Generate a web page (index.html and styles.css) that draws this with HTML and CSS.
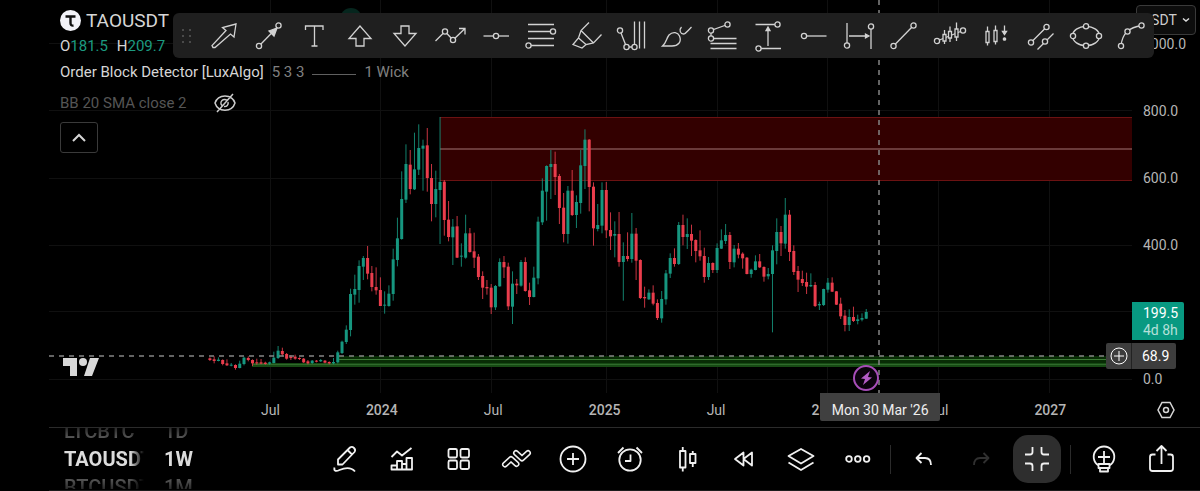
FILE: index.html
```html
<!DOCTYPE html>
<html lang="en">
<head>
    <meta charset="UTF-8">
    <meta name="viewport" content="width=device-width, initial-scale=1.0">
    <title>TAOUSDT 1W</title>
    <link rel="stylesheet" href="styles.css">
</head>
<body>
    <!-- Chart -->
    <main class="chart">
        <section class="plot">
            <svg class="plot-canvas" viewBox="49 0 1083 393" preserveAspectRatio="none" aria-label="TAOUSDT weekly candles">
                <path class="grid-lines" d="M270.5 0V393M380.5 0V393M491.5 0V393M606.5 0V393M717.5 0V393M827.5 0V393M938.5 0V393M1049.5 0V393M49 43.5H1132M49 110.5H1132M49 178.5H1132M49 245.5H1132M49 311.5H1132M49 379.5H1132"/>
                <circle cx="351" cy="19" r="11" fill="#06261e"/>
                <!-- Order blocks -->
                <rect x="440" y="117" width="692" height="64" fill="#330000"/>
                <path d="M440 117.5H1132M440 180.5H1132" stroke="#6b1212"/>
                <path d="M440 149H1132" stroke="#6b3a3a" stroke-width="2"/>
                <rect x="338" y="356" width="794" height="11" fill="#082c05"/>
                <rect x="252" y="363" width="880" height="4" fill="#174a14"/>
                <path d="M338 359.5H1132" stroke="#3c7a36"/>
                <path d="M252 364.5H1132" stroke="#2f6a2b"/>
                <g id="candles"></g>
                <!-- Crosshair -->
                <path class="crosshair" d="M49 356H1106M879 0V393"/>
                <circle cx="866" cy="378" r="12" fill="#0b020d" stroke="#a74db8" stroke-width="2"/>
                <path d="M870 371l-9 7.500 4 .5-2 6 9-7.500-4-.5z" fill="#b45bc6"/>
            </svg>

            <div class="legend">
                <h1 class="symbol">
                    <svg width="21" height="21" viewBox="0 0 21 21" aria-hidden="true">
                        <circle cx="10.5" cy="10.5" r="10.5" fill="#f2f2f8"/>
                        <path d="M5.5 6.5h10M10.5 7v6q0 3 3 2.5" fill="none" stroke="#111" stroke-width="2.4"/>
                    </svg>
                    TAOUSDT
                </h1>
                <p class="ohlc">O<span>181.5</span> <b>H</b><span>209.7</span></p>
                <p class="indicator">Order Block Detector [LuxAlgo] <span>5 3 3</span><i></i><span>1 Wick</span></p>
                <p class="indicator hidden">BB 20 SMA close 2
                    <button class="eye" aria-label="Show indicator">
                        <svg width="24" height="20" viewBox="0 0 24 20"><path d="M2 10C5 .5 19 .5 22 10 19 19.5 5 19.5 2 10zM4 19 20 1M9 12.5a3.500 3.500 0 0 1 5-5M15 9a3.500 3.500 0 0 1-4 4.500"/></svg>
                    </button>
                </p>
                <button class="collapse-legend" aria-label="Collapse legend">
                    <svg width="16" height="10" viewBox="0 0 16 10"><path d="M2 8l6-6 6 6"/></svg>
                </button>
            </div>

            <svg class="brand" width="37" height="19" viewBox="0 0 37 19" aria-label="TradingView">
                <path d="M0 0h14v18H7V8H0zM27 0h9l-7 18h-8z"/><circle cx="20" cy="4" r="4"/>
            </svg>
        </section>

        <aside class="price-axis">
            <span>1000.0</span>
            <span>800.0</span>
            <span>600.0</span>
            <span>400.0</span>
            <span></span>
            <span>0.0</span>
            <div class="last-price">199.5<br><small>4d 8h</small></div>
            <div class="cross-price">
                <button aria-label="Add alert"><svg width="18" height="18" viewBox="0 0 18 18"><circle cx="9" cy="9" r="8"/><path d="M9 4v10M4 9h10"/></svg></button>
                <span>68.9</span>
            </div>
            <label class="currency">
                <select aria-label="Currency"><option>USDT</option></select>
                <svg width="8" height="6" viewBox="0 0 8 6"><path d="M1 1.5l3 2.5 3-2.5"/></svg>
            </label>
        </aside>

        <div class="time-axis">
            <span>Jul</span>
            <strong>2024</strong>
            <span>Jul</span>
            <strong>2025</strong>
            <span>Jul</span>
            <strong>2026</strong>
            <span>Jul</span>
            <strong>2027</strong>
            <div class="cross-date">Mon 30 Mar '26</div>
        </div>
        <button class="axis-settings" aria-label="Axis settings">
            <svg width="18" height="18" viewBox="0 0 18 18"><path d="M5 1.5h8l4 7.5-4 7.5H5L1 9z"/><circle cx="9" cy="9" r="2.5"/></svg>
        </button>

        <!-- Favourite drawing tools -->
        <div class="drawing-tools" role="toolbar" aria-label="Drawing tools">
            <svg class="grip" width="12" height="16" viewBox="0 0 12 16" aria-hidden="true">
                <circle cx="2" cy="2" r="1"/><circle cx="9" cy="2" r="1"/><circle cx="2" cy="8" r="1"/><circle cx="9" cy="8" r="1"/><circle cx="2" cy="14" r="1"/><circle cx="9" cy="14" r="1"/>
            </svg>
            <button aria-label="Arrow marker"><svg viewBox="0 0 28 28"><path d="M26 2 12.5 5.5 16 8.5 2 23.5l1 2h2L20.5 12l3.5 3z"/></svg></button>
            <button aria-label="Arrow"><svg viewBox="0 0 28 28"><path d="M4 24 23.5 4"/><path class="solid" d="M22 6l-3 8-5-5z"/><circle cx="4" cy="24" r="2.6"/><circle cx="23.5" cy="3.5" r="2.6"/></svg></button>
            <button aria-label="Text"><svg viewBox="0 0 28 28"><path d="M5.5 8V4h17.5v4M14.5 4v20M11.5 24h6"/></svg></button>
            <button aria-label="Arrow mark up"><svg viewBox="0 0 28 28"><path d="M14 4 3 16.5H10V24H18V16.5H25z"/></svg></button>
            <button aria-label="Arrow mark down"><svg viewBox="0 0 28 28"><path d="M14 24 3 11.5H10V4H18V11.5H25z"/></svg></button>
            <button aria-label="Path"><svg viewBox="0 0 28 28"><path d="M-1.5 19 8 9.5l8 8.5L28 6.5M22 6.5h6v6"/><circle cx="8" cy="9.5" r="2.6"/><circle cx="16" cy="18" r="2.6"/></svg></button>
            <button aria-label="Horizontal line"><svg viewBox="0 0 28 28"><path d="M1.5 14H27"/><circle cx="14" cy="14" r="2.6"/></svg></button>
            <button aria-label="Fib retracement"><svg viewBox="0 0 28 28"><path d="M1 2.5H27M1 9.5H27M1 16.5H27M1 23.5H27"/><circle cx="26" cy="9.5" r="2.6"/><circle cx="1.5" cy="23.5" r="2.6"/></svg></button>
            <button aria-label="Highlighter"><svg viewBox="0 0 28 28"><path d="M16 .5 8 8.5 5.5 16 0 22.5l9 3.5 4-3.5 7.5-1.5 8-8.5M8 8.5 20.5 21M5.5 16 13 22.5"/></svg></button>
            <button aria-label="Pitchfan"><svg viewBox="0 0 28 28"><path d="M2 8.5l6.5 16.5h8V-.5M21.5-.5V26.5M26.5-.5V26.5"/><circle cx="2" cy="8.5" r="2.6"/><circle cx="8.5" cy="25" r="2.6"/><circle cx="16.5" cy="25" r="2.6"/></svg></button>
            <button aria-label="Brush"><svg viewBox="0 0 28 28"><path d="M-.5 24C4 20 3 17 6 13c4-4 9-2.5 10.5 1C19 20 15 24 9 24zM18.5 5c-3 3-1 7 2 7 2 0 3-2 8-7"/></svg></button>
            <button aria-label="Trend-based fib"><svg viewBox="0 0 28 28"><path d="M18.5 2.5 2 8.5v8H27.5M1.5 21.5h26M1.5 26.5h26"/><circle cx="18.5" cy="2.5" r="2.6"/><circle cx="2" cy="8.5" r="2.6"/><circle cx="2" cy="16.5" r="2.6"/></svg></button>
            <button aria-label="Price range"><svg viewBox="0 0 28 28"><path d="M1.5 2.5H24M4.5 26.5H27M14 24V6"/><path class="solid" d="M14 5l2 3.5h-4z"/><circle cx="23.5" cy="2.5" r="2.6"/><circle cx="4.5" cy="26.5" r="2.6"/></svg></button>
            <button aria-label="Horizontal ray"><svg viewBox="0 0 28 28"><path d="M4 14H26.5"/><circle cx="4" cy="14" r="2.6"/></svg></button>
            <button aria-label="Date range"><svg viewBox="0 0 28 28"><path d="M2 1V23M26 5V27M4 14H22"/><path class="solid" d="M24 14l-3.5 2v-4z"/><circle cx="2" cy="23.5" r="2.6"/><circle cx="26" cy="4.5" r="2.6"/></svg></button>
            <button aria-label="Trend line"><svg viewBox="0 0 28 28"><path d="M3.5 24 23.5 3.5"/><circle cx="3.5" cy="24" r="2.6"/><circle cx="23.5" cy="3.5" r="2.6"/></svg></button>
            <button aria-label="Bars pattern"><svg viewBox="0 0 28 28"><path d="M1 19l26-10.5M8.5 8v14M14 4.5V20M20.5.5V19"/><path class="body" d="M7 12.5h3v6.5H7zM12.5 9.5h3v6.5h-3zM19 7h3v8h-3z"/><circle cx="1" cy="19" r="2.6"/><circle cx="27" cy="8.5" r="2.6"/></svg></button>
            <button aria-label="Bars forecast"><svg viewBox="0 0 28 28"><path d="M6.5 4.5v19M14.5 3.5v19M23.5 3.5v6"/><path class="body" d="M5 9.5h3v11H5zM13 8.5h3v11h-3z"/><path class="solid" d="M21.5 9.5h4l-2 3z"/><circle class="solid" cx="23.5" cy="17" r="1.2"/></svg></button>
            <button aria-label="Parallel channel"><svg viewBox="0 0 28 28"><path d="M5 20.5 20.5 5M11.5 27.5l16-16"/><circle cx="5" cy="20.5" r="2.6"/><circle cx="20.5" cy="5" r="2.6"/><circle cx="19" cy="19.5" r="2.6"/></svg></button>
            <button aria-label="Ellipse"><svg viewBox="0 0 28 28"><ellipse cx="14" cy="14" rx="13.5" ry="9.7"/><circle cx="14" cy="4.3" r="2.6"/><circle cx="14" cy="23.7" r="2.6"/><circle cx="1" cy="14" r="2.6"/><circle cx="27" cy="14" r="2.6"/></svg></button>
            <button aria-label="Curve"><svg viewBox="0 0 28 28"><path d="M4 24Q5 14 10.5 9.5 15 5 24.5 3.5"/><circle cx="4" cy="24" r="2.6"/><circle cx="10.5" cy="9.5" r="2.6"/><circle cx="24.5" cy="3.5" r="2.6"/></svg></button>
        </div>
    </main>

    <!-- Bottom Bar -->
    <footer class="bottom-bar">
        <div class="wheel wheel-symbol">
            <span>LTCBTC</span>
            <strong>TAOUSDT</strong>
            <span>BTCUSDT</span>
        </div>
        <div class="wheel">
            <span>1D</span>
            <strong>1W</strong>
            <span>1M</span>
        </div>
        <nav class="actions">
            <button aria-label="Draw"><svg viewBox="0 0 28 28"><path d="M7 14.5 19 2.5q2-1.5 4 .5t.5 4L11.5 19.5H7zM16.5 5l4.5 4.5M3.5 22.5c-1 4 2 4 5 2.5 6-2.5 12-2.5 15.5 1.5"/></svg></button>
            <button aria-label="Indicators"><svg viewBox="0 0 28 28"><path d="M3.5 12 9 6.5l5 4L23.5 3M3.5 24.5v-4H9V16h5v3h4.5v-6H24V24.5zM9 20.5v4M14 19v5.5M18.5 19v5.5"/></svg></button>
            <button aria-label="Layouts"><svg viewBox="0 0 28 28"><rect x="3.5" y="4" width="8.5" height="8.5" rx="1.5"/><rect x="15.5" y="4" width="8.5" height="8.5" rx="1.5"/><rect x="3.5" y="15.5" width="8.5" height="8.5" rx="1.5"/><rect x="15.5" y="15.5" width="8.5" height="8.5" rx="1.5"/></svg></button>
            <button aria-label="Strategies"><svg viewBox="0 0 28 28"><g class="ribbon"><path d="M3 19.5 9 14l5.500 5"/><path class="inner" d="M3 19.5 9 14l5.500 5"/><path d="M14 8l6 5.500L26 8"/><path class="inner" d="M14 8l6 5.500L26 8"/></g></svg></button>
            <button aria-label="Add"><svg viewBox="0 0 28 28"><circle cx="14" cy="14" r="12.5"/><path d="M14 8v12M8 14h12"/></svg></button>
            <button aria-label="Alerts"><svg viewBox="0 0 28 28"><circle cx="14" cy="15" r="10.7"/><path d="M14.5 9.5V16H9M2 8l5.5-5.5M26 8l-5.5-5.5"/></svg></button>
            <button aria-label="Chart type"><svg viewBox="0 0 28 28"><path d="M7 6h5.5v16.5H7zM9.750 2v4M9.750 22.5v4M17 9h5.5v9H17zM19.750 6v3M19.750 18v4"/></svg></button>
            <button aria-label="Replay"><svg viewBox="0 0 28 28"><path d="M5 14l8.5-6.5v13zM13.5 14 22 7.5v13z"/></svg></button>
            <button aria-label="Object tree"><svg viewBox="0 0 28 28"><path d="M14 4 26.5 11 14 18.5 1.5 11zM1.5 17.5 14 25l12.5-7.5"/></svg></button>
            <button aria-label="More"><svg viewBox="0 0 28 28"><circle cx="5" cy="14" r="2.8"/><circle cx="13.8" cy="14" r="2.8"/><circle cx="22.6" cy="14" r="2.8"/></svg></button>
            <hr>
            <button aria-label="Undo"><svg viewBox="0 0 28 28"><path d="M11.5 8 6.5 13l5 5M6.5 13H15q6 0 6 7"/></svg></button>
            <button aria-label="Redo" disabled><svg viewBox="0 0 28 28"><path d="M16.5 8l5 5-5 5M21.5 13H13q-6 0-6 7"/></svg></button>
            <button class="active" aria-label="Exit fullscreen"><svg viewBox="0 0 28 28"><path d="M2 9.5h5q2.5 0 2.5-2.5V2M26 9.5h-5q-2.5 0-2.5-2.5V2M2 18.5h5q2.5 0 2.5 2.5v5M26 18.5h-5q-2.5 0-2.5 2.5v5"/></svg></button>
            <hr>
            <button aria-label="Publish idea"><svg viewBox="0 0 28 28"><path d="M8.5 20.5a10.3 10.3 0 1 1 11 0M8.5 19h11v4h-11zM10 23h8v3.5h-8zM14 6v12M8 12h12"/></svg></button>
            <button aria-label="Share"><svg viewBox="0 0 28 28"><path d="M8.5 9.5H5.5q-2.5 0-2.5 2.5v11.5q0 2.5 2.5 2.5h18q2.5 0 2.5-2.5V12q0-2.5-2.5-2.5h-3M14.5 19V1.5M9.5 6l5-5 5 5"/></svg></button>
        </nav>
    </footer>

    <script>
        // Each row: direction, body top, body bottom, wick top, wick bottom (3 units per chart unit)
        const history = `
            d 775 780 772 783|d 778 783 769 790|u 779 783 772 784|d 780 792 778 796|d 790 796 778 798
            u 794 797 789 799|d 795 804 793 809|u 791 804 782 805|u 773 792 770 796|d 774 780 769 784
            d 780 790 778 798|d 787 790 776 794|d 787 791 777 793|d 788 792 785 794|u 787 791 785 794
            u 773 789 755 790|u 752 774 738 777|d 753 763 743 769|d 762 776 759 779|d 770 774 765 780
            d 770 776 764 779|d 774 777 772 780|d 776 787 774 789|d 784 790 780 793|u 782 789 780 792
            d 782 785 780 787|u 780 784 777 786|d 782 788 780 790|d 786 790 784 793|u 786 790 774 793
            u 757 787 752 790|u 725 759 722 762|u 689 726 676 732|u 582 690 566 709|u 567 584 524 614
            u 498 570 481 608|u 474 500 468 540|d 474 521 438 538|d 519 561 498 574|d 561 571 502 584
            d 570 618 532 618|u 614 617 574 641|u 581 618 556 620|u 478 582 446 602|u 415 480 353 499
            u 297 417 214 419|u 192 299 133 309|d 194 267 150 283|u 208 268 98 270|u 144 209 73 225
            u 137 146 119 272|d 136 234 84 275|d 234 312 192 364|u 267 312 212 352|u 246 270 51 432
            d 245 360 240 407|d 359 411 303 424|u 380 412 357 495|d 379 473 348 474|u 467 470 430 500
            u 400 473 344 476|d 400 456 384 458|d 454 473 398 504|d 470 531 462 540|d 528 563 514 597
            d 561 565 540 584|d 563 622 552 642|u 558 622 555 630|u 486 559 475 560|d 486 502 468 534
            d 500 619 488 630|u 551 620 514 672|d 551 556 537 582|u 486 557 480 560|d 486 573 472 575
            d 571 591 548 615|u 533 591 500 592|u 365 535 350 553|u 272 367 235 375|u 198 275 196 362
            u 192 201 150 297|d 192 231 155 285|d 228 324 222 372|d 323 402 279 427|u 272 402 258 431
            d 272 345 210 348|u 306 345 286 384|u 196 309 150 341|u 119 198 88 267|d 119 261 117 334
            d 260 385 247 437|u 375 387 312 394|u 270 377 247 400|d 270 391 246 414|d 390 409 337 450
            u 402 407 364 472|d 402 486 336 500|u 468 486 427 602|d 468 477 397 484|u 401 477 339 488
            d 401 482 384 540|d 480 594 478 597|d 591 595 560 623|u 578 598 568 600|d 578 611 556 616
            d 609 654 598 660|u 597 655 573 668|u 520 598 510 614|u 474 521 460 534|d 474 492 445 500
            u 375 492 366 495`;
        const recent = `
            d 135 171 104 196|u 162 171 115 207|d 162 182 134 228|d 180 213 178 247|d 211 229 151 242
            d 228 291 203 308|u 249 291 231 300|d 249 270 247 279|u 204 270 190 279|u 181 206 148 207
            u 165 183 132 192|d 165 246 156 267|u 206 247 195 262|d 206 224 189 235|d 221 235 217 266
            d 233 282 231 283|u 269 282 266 293|u 244 270 226 271|d 244 262 222 264|d 261 290 259 305
            u 282 289 264 298|u 211 282 196 457|u 156 213 115 253|d 156 190 138 228|u 104 191 54 206
            d 104 216 90 243|d 213 276 196 285|d 273 299 258 336|d 297 309 272 318|d 306 320 278 342
            u 315 319 280 321|d 315 378 306 381|u 372 376 365 390|u 327 375 326 378|u 308 329 294 338
            d 308 335 292 336|d 334 374 333 375|d 371 409 353 417|d 407 435 390 454|u 411 435 388 453
            d 411 423 380 426|u 418 423 404 433|u 414 419 400 424|u 396 416 387 417`;

        function parse(text, top) {
            return text.trim().split(/\n|\|/).map(row => {
                const [dir, ...values] = row.trim().split(' ');
                return [dir, ...values.map(v => top + v / 3)];
            });
        }

        const firstX = 209.9;
        const step = 4.262;
        const candles = [...parse(history, 100), ...parse(recent, 180)];

        document.getElementById('candles').innerHTML = candles.map(([dir, top, bottom, high, low], i) => {
            const x = firstX + i * step;
            return `<g class="${dir === 'u' ? 'up' : 'down'}">
                <rect class="wick" x="${x - 0.5}" y="${high}" width="1" height="${low - high}"/>
                <rect x="${x - 1.5}" y="${top}" width="3" height="${bottom - top}"/>
            </g>`;
        }).join('');
    </script>
</body>
</html>
```
FILE: styles.css
```css
/* Global Styles */
* {
    box-sizing: border-box;
}

body {
    margin: 0;
    min-height: 100vh;
    display: flex;
    flex-direction: column;
    background-color: #000;
    color: #d6d6d6;
    font-family: Roboto, Arial, sans-serif;
    font-size: 14px;
}

button {
    display: flex;
    align-items: center;
    justify-content: center;
    margin: 0;
    padding: 0;
    border: none;
    background: none;
    color: inherit;
    cursor: pointer;
}

svg {
    display: block;
}

button svg,
.currency svg {
    flex: none;
    fill: none;
    stroke: currentColor;
    overflow: visible;
}

/* Chart */
.chart {
    flex: 1;
    position: relative;
    display: grid;
    grid-template-columns: 1fr 68px;
    grid-template-rows: 1fr 34px;
    padding-left: 49px;
}

.plot {
    position: relative;
    min-height: 340px;
}

.plot-canvas {
    position: absolute;
    width: 100%;
    height: 100%;
}

.grid-lines {
    stroke: #101010;
}

.crosshair {
    fill: none;
    stroke: #858585;
    stroke-width: 1.5;
    stroke-dasharray: 5 5;
}

.up {
    fill: #16967f;
}

.down {
    fill: #ea3d4c;
}

.wick {
    opacity: 0.85;
}

/* Legend */
.legend {
    position: relative;
    display: flex;
    flex-direction: column;
    align-items: flex-start;
    padding: 8px 0 0 11px;
    font-size: 15px;
}

.legend p {
    margin: 0;
}

.symbol {
    display: flex;
    align-items: center;
    gap: 5px;
    height: 24px;
    margin: 0;
    font-size: 19px;
    font-weight: 400;
}

.ohlc {
    line-height: 28px;
}

.ohlc span {
    color: #1c9b80;
}

.ohlc b {
    margin-left: 5px;
    font-weight: 400;
}

.indicator {
    display: flex;
    align-items: center;
    gap: 8px;
    height: 24px;
    white-space: nowrap;
}

.indicator span {
    color: #808080;
}

.indicator i {
    width: 44px;
    height: 1px;
    margin-top: 4px;
    background-color: #606060;
}

.indicator.hidden {
    gap: 26px;
    height: 38px;
    color: #555;
}

.eye {
    color: #ccc;
}

.eye svg {
    stroke-width: 1.5;
}

.collapse-legend {
    width: 38px;
    height: 31px;
    border: 1px solid #3a3a3a;
    border-radius: 3px;
}

.collapse-legend svg {
    stroke-width: 2;
}

.brand {
    position: absolute;
    left: 14px;
    bottom: 16px;
    fill: #d8d8d8;
}

/* Price Axis */
.price-axis {
    position: relative;
    display: grid;
    grid-template-rows: repeat(5, 67fr) 24fr;
    padding: 34px 0 0 11px;
    line-height: 20px;
    color: #b5b5b5;
}

.last-price {
    position: absolute;
    left: 0;
    bottom: 53px;
    width: 52px;
    padding: 3px 0 1px 11px;
    border-radius: 0 2px 2px 0;
    background-color: #089981;
    color: #fff;
    line-height: 17px;
}

.last-price small {
    font-size: 14px;
    color: #b5e0d9;
}

.cross-price {
    position: absolute;
    right: 24px;
    bottom: 24px;
    display: flex;
    width: 70px;
    height: 26px;
    border-radius: 2px;
    background-color: #3d3d3d;
    color: #fff;
    line-height: 27px;
}

.cross-price button {
    width: 26px;
    border-right: 1px solid #222;
}

.cross-price span {
    padding-left: 10px;
}

.currency {
    position: absolute;
    top: 5px;
    right: 4px;
    display: flex;
    align-items: center;
    width: 60px;
    height: 30px;
    padding: 0 5px;
    border: 1px solid #3a3a3a;
    border-radius: 4px;
    background-color: #0d0d0d;
}

.currency select {
    appearance: none;
    flex: 1;
    min-width: 0;
    padding: 0;
    border: none;
    background: none;
    color: #ccc;
    font: inherit;
}

.currency svg {
    color: #ddd;
    stroke-width: 1.5;
}

/* Time Axis */
.time-axis {
    position: relative;
    display: grid;
    grid-template-columns: repeat(8, 1fr);
    padding: 0 2.4% 0 15.3%;
    text-align: center;
    line-height: 34px;
    color: #b5b5b5;
}

.time-axis strong {
    font-weight: 500;
}

.cross-date {
    position: absolute;
    top: 0;
    left: 71.2%;
    width: 120px;
    height: 28px;
    padding-top: 3px;
    border-radius: 0 0 2px 2px;
    background-color: #404040;
    color: #eee;
    line-height: 28px;
}

.axis-settings svg {
    stroke-width: 1.5;
}

/* Drawing Tools */
.drawing-tools {
    position: absolute;
    top: 13px;
    left: 173px;
    right: 46px;
    display: flex;
    align-items: center;
    height: 45px;
    padding-left: 8px;
    border-radius: 6px;
    background-color: #1f1f1f;
    color: #d2d2d2;
}

.drawing-tools button {
    flex: 1;
    min-width: 0;
}

.drawing-tools button svg {
    width: 28px;
    height: 28px;
    stroke-width: 1.3;
}

.drawing-tools circle,
.drawing-tools .body {
    fill: #1f1f1f;
}

.drawing-tools .solid {
    fill: currentColor;
}

.drawing-tools .grip {
    width: 20px;
    padding-right: 8px;
}

.drawing-tools .grip circle {
    fill: #5a5a5a;
}

/* Bottom Bar */
.bottom-bar {
    display: flex;
    height: 64px;
    margin-left: 49px;
    padding: 0 11px 0 15px;
    border-top: 1px solid #2b2b2b;
    border-bottom: 1px solid #1c1c1c;
}

.wheel {
    display: flex;
    flex-direction: column;
    justify-content: center;
    height: 61px;
    overflow: hidden;
    margin-right: 20px;
    line-height: 28px;
    font-size: 20px;
    font-weight: 500;
    color: #8a8a8a;
    mask-image: linear-gradient(rgba(0, 0, 0, 0.3), #000 35%, #000 65%, rgba(0, 0, 0, 0.3));
}

.wheel strong {
    font-weight: 700;
    color: #dcdcdc;
}

.wheel-symbol {
    position: relative;
    width: 80px;
}

/* Fades names too long for the wheel */
.wheel-symbol::after {
    content: "";
    position: absolute;
    inset: 0 0 0 auto;
    width: 14px;
    background: linear-gradient(to right, transparent, #000);
}

.actions {
    display: flex;
    align-items: center;
    margin-left: auto;
    color: #f0f0f0;
}

.actions button {
    width: 57px;
    height: 48px;
}

.actions svg {
    width: 28px;
    height: 28px;
    stroke-width: 1.8;
    stroke-linejoin: round;
}

.actions hr {
    width: 1px;
    height: 29px;
    margin: 0 4px;
    border: none;
    background-color: #2b2b2b;
}

.actions button:disabled {
    color: #303030;
}

.actions .active {
    width: 48px;
    margin: 0 5px 0 4px;
    border-radius: 15px;
    background-color: #2e2e2e;
}

.ribbon {
    stroke-width: 6;
    stroke-linecap: round;
}

.ribbon .inner {
    stroke: #000;
    stroke-width: 3;
}
```
